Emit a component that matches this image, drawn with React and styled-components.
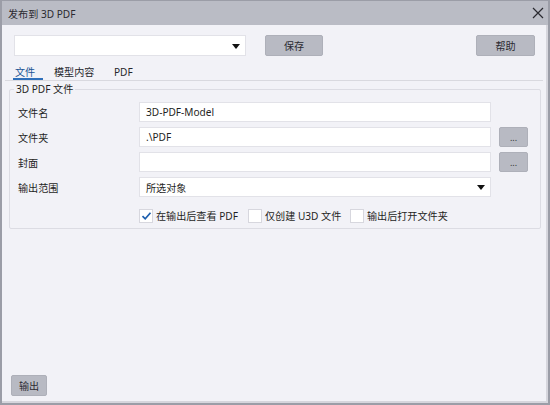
import React from 'react'
import styled, { createGlobalStyle } from 'styled-components'

const GlobalStyle = createGlobalStyle`
  html, body {
    margin: 0;
    padding: 0;
    background: #9b9da7;
  }
  body {
    font-family: "Noto Sans", "Noto Sans CJK SC", sans-serif;
    font-size: 10.1px;
    color: #1f1f24;
  }
`

const Window = styled.div`
  width: 550px;
  height: 405px;
  box-sizing: border-box;
  display: flex;
  flex-direction: column;
  border: 2px solid #9b9da7;
  border-top-width: 1px;
  background: #babcc5;
`

const TitleBar = styled.div`
  height: 24px;
  display: flex;
  align-items: center;
  justify-content: space-between;
  padding: 0 4px 0 6px;
  color: #2a2a30;
`

const Body = styled.div`
  flex: 1;
  display: flex;
  flex-direction: column;
  background: #f2f2f7;
  border-right: 2px solid #d6d6dd;
  border-bottom: 2px solid #d6d6dd;
  padding: 10px 3px 5px 3px;
  min-height: 0;
`

const TopRow = styled.div`
  display: flex;
  align-items: center;
  padding: 0 8px 0 9px;
`

const Combo = styled.div`
  box-sizing: border-box;
  width: ${p => p.width}px;
  height: 21px;
  background: #fff;
  border: 1px solid #e2e2e8;
  display: flex;
  align-items: center;
  justify-content: flex-end;
  padding: 0 5px 0 6px;
`

const Arrow = styled.span`
  width: 0;
  height: 0;
  border-left: 4.5px solid transparent;
  border-right: 4.5px solid transparent;
  border-top: 5px solid #111;
  margin-top: 1px;
`

const Button = styled.div`
  box-sizing: border-box;
  width: ${p => p.width}px;
  height: 21px;
  margin-left: ${p => p.ml || 0}px;
  background: #b8bac3;
  border: 1px solid #aeb0b9;
  border-radius: 2px;
  display: flex;
  align-items: center;
  justify-content: center;
  color: #2b2b32;
`

const Spacer = styled.div`
  flex: 1;
`

const Tabs = styled.div`
  display: flex;
  margin-top: 10px;
  border-bottom: 1px solid #d9d9df;
  padding-left: 8px;
  height: 14px;
`

const Tab = styled.div`
  box-sizing: border-box;
  width: ${p => p.width}px;
  padding-left: 2px;
  margin-right: ${p => p.mr}px;
  line-height: 12px;
  height: 14px;
  color: ${p => (p.active ? '#1b5394' : '#26262c')};
  border-bottom: 2px solid ${p => (p.active ? '#2f6fba' : 'transparent')};
`

const Group = styled.fieldset`
  margin: 3px 2px 0 4px;
  padding: 7px 11px 5px 8px;
  border: 1px solid #dcdce3;
  border-radius: 2px;
  min-width: 0;
`

const Legend = styled.legend`
  padding: 0 2px;
  margin-left: -4px;
  line-height: 11px;
  color: #1f1f24;
`

const Grid = styled.div`
  display: grid;
  grid-template-columns: 113px 352px 29px;
  column-gap: 8px;
  row-gap: 5px;
  grid-auto-rows: 20px;
  align-items: center;
`

const Label = styled.div``

const Input = styled.div`
  box-sizing: border-box;
  height: 20px;
  background: #fff;
  border: 1px solid #e2e2e8;
  display: flex;
  align-items: center;
  justify-content: space-between;
  padding: 0 5px 0 6px;
  grid-column: ${p => (p.span ? 'span 2' : 'auto')};
  margin-right: ${p => (p.span ? '37px' : '0')};
`

const Browse = styled.div`
  box-sizing: border-box;
  height: 20px;
  background: #b8bac3;
  border: 1px solid #aeb0b9;
  border-radius: 2px;
  display: flex;
  align-items: flex-end;
  justify-content: center;
  padding-bottom: 4px;
  font-size: 9px;
  line-height: 9px;
  color: #333;
`

const Checks = styled.div`
  display: flex;
  align-items: center;
  margin: 11px 0 0 121px;
`

const CheckItem = styled.label`
  display: flex;
  align-items: center;
  width: ${p => (p.width ? `${p.width}px` : 'auto')};
`

const Box = styled.span`
  box-sizing: border-box;
  width: 14px;
  height: 14px;
  background: #fff;
  border: 1px solid #d7d7de;
  display: flex;
  align-items: center;
  justify-content: center;
  margin-right: 3px;
`

const Footer = styled.div`
  display: flex;
  padding-left: 6px;
`

const Check = ({ checked, children, width }) => (
  <CheckItem width={width}>
    <Box>
      {checked && (
        <svg width="11" height="10" viewBox="0 0 11 10">
          <path d="M1.5 5.2 L4.2 7.8 L9.5 1.8" fill="none" stroke="#1d5fae" strokeWidth="1.7" />
        </svg>
      )}
    </Box>
    {children}
  </CheckItem>
)

export default function App() {
  return (
    <>
      <GlobalStyle />
      <Window>
        <TitleBar>
          <span>发布到 3D PDF</span>
          <svg width="12" height="12" viewBox="0 0 12 12">
            <path d="M1 1 L11 11 M11 1 L1 11" stroke="#2a2a30" strokeWidth="1.2" />
          </svg>
        </TitleBar>
        <Body>
          <TopRow>
            <Combo width={232}>
              <Arrow />
            </Combo>
            <Button width={58} ml={19}>保存</Button>
            <Spacer />
            <Button width={59}>帮助</Button>
          </TopRow>
          <Tabs>
            <Tab active width={30} mr={9}>文件</Tab>
            <Tab width={58} mr={2}>模型内容</Tab>
            <Tab width={26} mr={0}>PDF</Tab>
          </Tabs>
          <Group>
            <Legend>3D PDF 文件</Legend>
            <Grid>
              <Label>文件名</Label>
              <Input span>3D-PDF-Model</Input>
              <Label>文件夹</Label>
              <Input>.\PDF</Input>
              <Browse>...</Browse>
              <Label>封面</Label>
              <Input />
              <Browse>...</Browse>
              <Label>输出范围</Label>
              <Input span>
                <span>所选对象</span>
                <Arrow />
              </Input>
            </Grid>
            <Checks>
              <Check checked width={109}>在输出后查看 PDF</Check>
              <Check width={102}>仅创建 U3D 文件</Check>
              <Check>输出后打开文件夹</Check>
            </Checks>
          </Group>
          <Spacer />
          <Footer>
            <Button width={36}>输出</Button>
          </Footer>
        </Body>
      </Window>
    </>
  )
}
